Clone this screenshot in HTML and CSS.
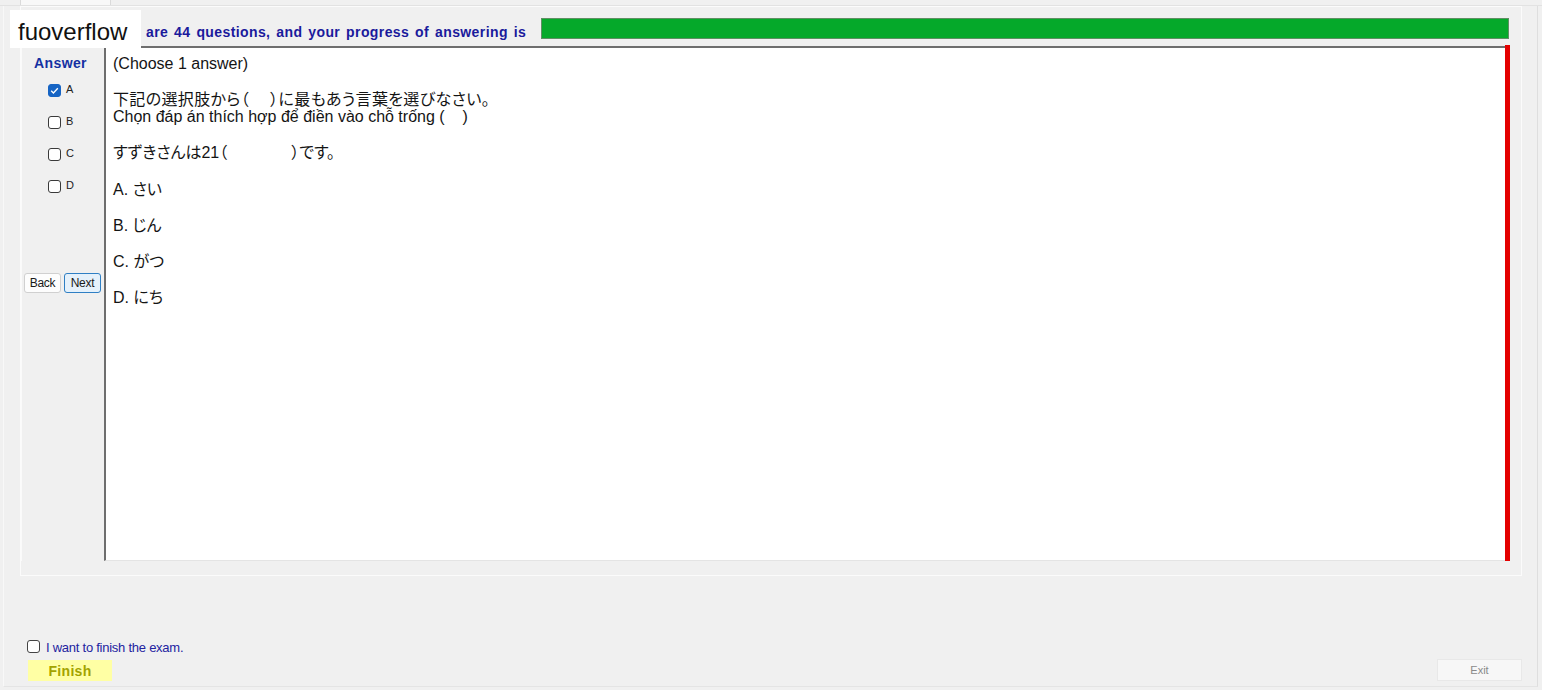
FILE: index.html
```html
<!DOCTYPE html>
<html lang="en">
<head>
<meta charset="utf-8">
<title>Exam</title>
<link rel="stylesheet" href="styles.css">
</head>
<body>
<div class="app">
  <div class="tabs"><div class="tab"></div></div>
  <div class="window">
    <section class="group">
      <header class="head">
        <span class="head-text">There are 44 questions, and your progress of answering is</span>
        <div class="progress"><div class="progress-fill" style="width:100%"></div></div>
      </header>
      <div class="main">
        <aside class="side">
          <div class="side-title">Answer</div>
          <ul class="opts">
            <li class="opt"><span class="cb on"><svg viewBox="0 0 13 13" width="13" height="13"><path d="M3.2 6.8 L5.4 9 L9.8 4.2" fill="none" stroke="#fff" stroke-width="1.3"/></svg></span><span class="opt-label">A</span></li>
            <li class="opt"><span class="cb"></span><span class="opt-label">B</span></li>
            <li class="opt"><span class="cb"></span><span class="opt-label">C</span></li>
            <li class="opt"><span class="cb"></span><span class="opt-label">D</span></li>
          </ul>
          <div class="nav">
            <button class="btn">Back</button>
            <button class="btn next">Next</button>
          </div>
        </aside>
        <div class="question">
          <div class="q-box">
            <p class="para">(Choose 1 answer)</p>
            <p class="para tight"><span class="jp-line">下記の選択肢から（　 ）に最もあう言葉を選びなさい。</span><br>Chọn đáp án thích hợp để điền vào chỗ trống (&nbsp;&nbsp;&nbsp;&nbsp;)</p>
            <p class="para stem">すずきさんは21（　　　　）です。</p>
            <p class="para">A. さい</p>
            <p class="para">B. じん</p>
            <p class="para">C. がつ</p>
            <p class="para">D. にち</p>
          </div>
          <div class="q-bar"></div>
        </div>
      </div>
    </section>
    <footer class="foot">
      <div class="foot-left">
        <label class="finish-check"><span class="cb small"></span><span class="finish-text">I want to finish the exam.</span></label>
        <button class="finish">Finish</button>
      </div>
      <button class="exit">Exit</button>
    </footer>
  </div>
  <div class="watermark">fuoverflow</div>
</div>
</body>
</html>
```
FILE: styles.css
```css
* { box-sizing: border-box; }
html, body { margin: 0; padding: 0; }
body {
  background: #f0f0f0;
  font-family: "Liberation Sans", "Noto Sans CJK JP", Arial, sans-serif;
  color: #111;
}
.app {
  position: relative;
  width: 1542px;
  height: 690px;
  overflow: hidden;
}
.tabs {
  height: 6px;
  border-bottom: 1px solid #e2e2e2;
}
.tab {
  margin-left: 20px;
  width: 91px;
  height: 5px;
  background: #f8f8f8;
  border-left: 1px solid #dadada;
  border-right: 1px solid #dadada;
}
.window {
  margin-left: 3px;
  width: 1535px;
  height: 681px;
  border-left: 1px solid #f8f8f8;
  border-right: 1px solid #dedede;
  border-bottom: 1px solid #e4e4e4;
  display: flex;
  flex-direction: column;
}
.group {
  margin-left: 16px;
  width: 1502px;
  height: 570px;
  border: 1px solid #fbfbfb;
  display: flex;
  flex-direction: column;
}
.head {
  height: 39px;
  display: flex;
  align-items: flex-start;
  padding-left: 79px;
  flex: none;
}
.head-text {
  margin-top: 17px;
  font-size: 14px;
  line-height: 16px;
  font-weight: bold;
  letter-spacing: 0.4px;
  word-spacing: 1.6px;
  color: #1a1a9c;
  white-space: nowrap;
}
.progress {
  margin-left: auto;
  margin-right: 12px;
  margin-top: 11px;
  width: 968px;
  height: 21px;
  border: 1px solid #5f8f63;
  background: #e6e6e6;
}
.progress-fill {
  height: 100%;
  background: #05a92a;
}
.main {
  flex: 1;
  display: flex;
  padding-right: 11px;
  padding-bottom: 14px;
}
.side {
  width: 83px;
  flex: none;
  border-left: 1px solid #fafafa;
}
.side-title {
  margin-top: 9px;
  padding-left: 12px;
  font-size: 14px;
  line-height: 16px;
  font-weight: bold;
  letter-spacing: 0.4px;
  color: #1530a2;
}
.opts {
  list-style: none;
  margin: 3px 0 0 0;
  padding: 0 0 0 26px;
}
.opt {
  height: 32px;
  display: flex;
  align-items: center;
  gap: 5px;
}
.cb {
  width: 13px;
  height: 13px;
  border: 1px solid #3a3a3a;
  border-radius: 3px;
  background: #fff;
  display: inline-block;
  flex: none;
  position: relative;
}
.cb.on {
  background: #1664c4;
  border-color: #1664c4;
}
.cb.on svg {
  position: absolute;
  left: -1px;
  top: -1px;
}
.opt-label {
  font-size: 11px;
  color: #222;
  margin-top: -3px;
}
.nav {
  margin-top: 71px;
  padding-left: 2px;
  display: flex;
  gap: 3px;
}
.btn {
  width: 37px;
  height: 20px;
  padding: 0;
  font-family: "Liberation Sans", Arial, sans-serif;
  font-size: 12px;
  letter-spacing: -0.3px;
  color: #1a1a1a;
  background: #fdfdfd;
  border: 1px solid #d0d0d0;
  border-radius: 3px;
}
.btn.next {
  background: #e5f1fb;
  border-color: #2f7fc4;
}
.question {
  flex: 1;
  display: flex;
}
.q-box {
  flex: 1;
  background: #fff;
  border-top: 2px solid #6e6e6e;
  border-left: 2px solid #6e6e6e;
  border-bottom: 1px solid #e4e4e4;
  padding: 7px 0 0 7px;
}
.q-bar {
  width: 5px;
  margin-top: -1px;
  background: #e40000;
}
.para {
  margin: 0 0 18px 0;
  font-size: 16px;
  line-height: 18px;
  color: #141414;
  font-feature-settings: "palt";
  white-space: nowrap;
}
.para.tight {
  line-height: 17px;
  margin: 2px 0 19px 0;
}
.para.stem {
  margin-bottom: 19px;
}
.jp-line {
  letter-spacing: 0.35px;
}
.foot {
  margin-top: 63px;
  padding: 0 15px 0 23px;
  display: flex;
  align-items: flex-end;
  justify-content: space-between;
}
.foot-left {
  display: flex;
  flex-direction: column;
  align-items: flex-start;
}
.finish-check {
  display: flex;
  align-items: center;
  gap: 6px;
  height: 14px;
}
.cb.small {
  border-color: #444;
}
.finish-text {
  font-size: 13px;
  margin-top: 3px;
  color: #2323a0;
  letter-spacing: -0.25px;
}
.finish {
  margin-top: 7px;
  margin-left: 1px;
  width: 84px;
  height: 21px;
  padding: 0;
  border: none;
  background: #ffffa4;
  font-family: "Liberation Sans", Arial, sans-serif;
  font-size: 14px;
  font-weight: bold;
  letter-spacing: 0.3px;
  color: #a3a300;
}
.exit {
  width: 85px;
  height: 22px;
  padding: 0;
  background: #f7f7f7;
  border: 1px solid #e8e8e8;
  font-family: "Liberation Sans", Arial, sans-serif;
  font-size: 11px;
  color: #8a8a8a;
}
.watermark {
  position: absolute;
  left: 10px;
  top: 10px;
  width: 131px;
  height: 38px;
  background: #fff;
  padding-left: 8px;
  font-size: 24px;
  line-height: 43px;
  color: #111;
}
```
